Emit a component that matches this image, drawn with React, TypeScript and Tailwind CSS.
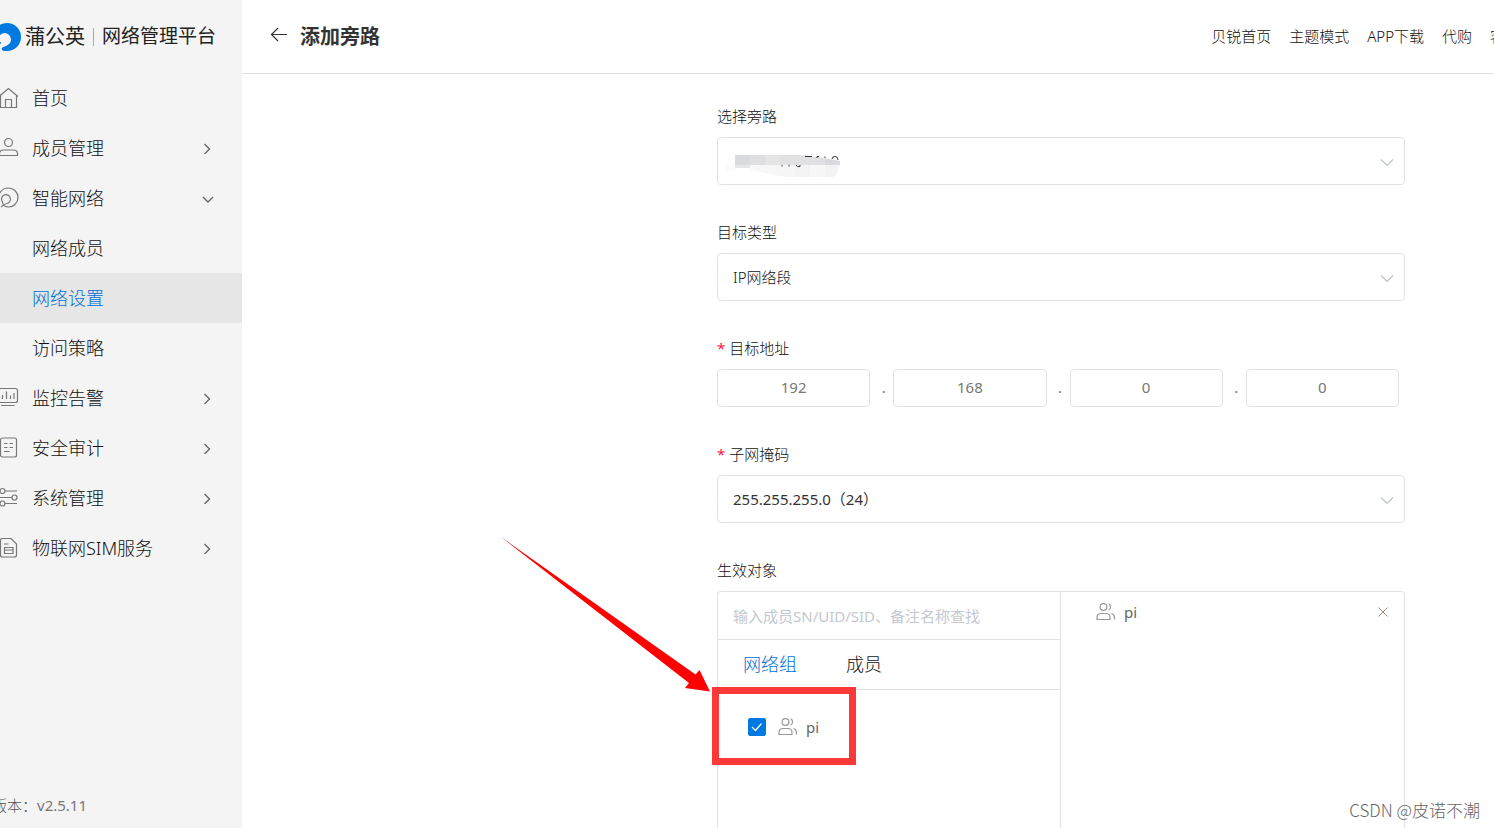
import { useState, type ReactNode } from "react";

type MenuItem = {
  label: string;
  icon: ReactNode;
  open?: boolean;
  children?: string[];
  leaf?: boolean;
};

const menu: MenuItem[] = [
  {
    label: "首页",
    leaf: true,
    icon: (
      <>
        <path d="M-1 9.5 8.5 1.5 18 9.5M.5 8.5V20.5H16.5V8.5" />
        <path d="M5.5 20V12.5H11.5V20" />
      </>
    ),
  },
  {
    label: "成员管理",
    icon: (
      <>
        <circle cx="8.5" cy="5.5" r="4" />
        <path d="M-.5 18.5V16.5Q-.5 13 4 13H13Q17.5 13 17.5 16.5V18.5Z" />
      </>
    ),
  },
  {
    label: "智能网络",
    open: true,
    children: ["网络成员", "网络设置", "访问策略"],
    icon: (
      <>
        <path d="M-1.5 14.5C-2.5 6 2 1 8.5 1A9.5 9.5 0 0 1 8.5 20C5.500 20 2.500 18.500 2.500 14.500" />
        <path d="M2.500 15A4.500 4.500 0 1 1 7 16.500Q4 17 1 20" />
      </>
    ),
  },
  {
    label: "监控告警",
    icon: (
      <>
        <rect x="-1.500" y="1.500" width="19" height="14" rx="2" />
        <path d="M1 18.500H14.500M2.500 8V12M6.500 4.500V12M10.500 8.500V12M14 6V12" />
      </>
    ),
  },
  {
    label: "安全审计",
    icon: (
      <>
        <rect x=".5" y="1" width="16" height="19" rx="2" />
        <path d="M4 6.500H7.500M9.500 6.500H13M4 10.500H7.500M9.500 10.500H13M4 14.500H9.500" />
      </>
    ),
  },
  {
    label: "系统管理",
    icon: (
      <>
        <circle cx="2.500" cy="4" r="2.500" />
        <circle cx="14.500" cy="10.500" r="2.500" />
        <circle cx="2.500" cy="16.500" r="2.500" />
        <path d="M5 4H17M-1 10.500H12M5 16.500H17" />
      </>
    ),
  },
  {
    label: "物联网SIM服务",
    icon: (
      <>
        <path d="M2.500 1.500H11L16.500 7V18Q16.500 20 14.500 20H2.500Q.5 20 .5 18V3.500Q.5 1.500 2.500 1.500Z" />
        <path d="M4 7H8.500M4.500 10.500H13V16.500H4.500ZM4.500 13H13" />
      </>
    ),
  },
];

const topLinks = ["贝锐首页", "主题模式", "APP下载", "代购"];

const Chevron = ({ down }: { down?: boolean }) => (
  <svg className="h-3 w-3" viewBox="0 0 12 12" fill="none" stroke="#666" strokeWidth="1.400">
    {down ? <path d="M1 5 6 10 11 5" /> : <path d="M2.500 2 7.500 7 2.500 12" />}
  </svg>
);

const UsersIcon = () => (
  <svg className="h-5 w-5" viewBox="0 0 20 20" fill="none" stroke="#999" strokeWidth="1.200">
    <circle cx="7.500" cy="5" r="3.400" />
    <path d="M1 17.500V15.500Q1 11.500 5 11.500H10Q14 11.500 14 15.500V17.500Z" />
    <path d="M12.500 1.800Q14.500 2.500 14.500 5T12.500 8.200M15.500 11.500Q18.400 12.500 18.400 15V17.500" />
  </svg>
);

const Sidebar = () => (
  <aside className="flex w-[242px] shrink-0 flex-col overflow-hidden bg-[#f4f4f4]">
    <div className="flex h-[73px] items-center whitespace-nowrap text-[#222]">
      <svg className="h-7 w-[22px] shrink-0" viewBox="0 0 22 28" fill="#0079e0">
        <path d="M0 1.700Q3 0 7 0A14 14 0 0 1 7 28Q2 28.500 1.700 26.300C1.500 24.500 3.500 24 5.500 23.300C9 22 11 19.500 11 16.500A6.500 6.500 0 0 0 4.500 10Q2 10 0 12Z" />
        <circle cx="0" cy="20" r="1" />
      </svg>
      <span className="ml-[3px] text-[20px]">蒲公英</span>
      <span className="mx-2 h-[18px] w-px bg-[#aaa]" />
      <span className="text-[19px]">网络管理平台</span>
    </div>
    <nav className="text-[18px] font-light text-[#111]">
      {menu.map((item) => (
        <div key={item.label}>
          <button type="button" className="flex h-[50px] w-full items-center">
            <svg className="h-[22px] w-5 shrink-0" viewBox="0 0 20 22" fill="none" stroke="#777" strokeWidth="1.200">
              {item.icon}
            </svg>
            <span className="ml-3">{item.label}</span>
            {!item.leaf && (
              <span className="mr-7 ml-auto">
                <Chevron down={item.open} />
              </span>
            )}
          </button>
          {item.children?.map((child) => (
            <a
              key={child}
              href="#"
              className={
                child === "网络设置"
                  ? "flex h-[50px] items-center bg-[#e6e6e6] pl-8 text-[#0070d8]"
                  : "flex h-[50px] items-center pl-8"
              }
            >
              {child}
            </a>
          ))}
        </div>
      ))}
    </nav>
    <div className="mt-auto -ml-2 pb-3 text-[15px] leading-[22px] font-light text-[#555]">
      版本：<span className="font-normal text-[#777]">v2.5.11</span>
    </div>
  </aside>
);

const Header = () => (
  <header className="flex h-[74px] shrink-0 items-center border-b border-[#e3e3e3] pl-7 whitespace-nowrap text-[#333]">
    <button type="button" aria-label="返回">
      <svg className="h-[18px] w-[18px]" viewBox="0 0 18 18" fill="none" stroke="#333" strokeWidth="1.200">
        <path d="M17 6.500H1.500M8 0 1.500 6.500 8 13" />
      </svg>
    </button>
    <h1 className="ml-3 text-[20px] font-bold">添加旁路</h1>
    <nav className="ml-auto flex gap-[18px] text-[15px] font-light text-[#111]">
      {topLinks.map((link) => (
        <a key={link} href="#">
          {link}
        </a>
      ))}
      <a href="#" className="w-1 overflow-hidden">
        客服
      </a>
    </nav>
  </header>
);

type FieldProps = {
  label: string;
  id: string;
  required?: boolean;
  children: ReactNode;
};

const Field = ({ label, id, required, children }: FieldProps) => (
  <div className="mb-[35px]">
    <label htmlFor={id} className="mb-[9px] block text-[15px] leading-6 font-light text-[#111]">
      {required && <span className="mr-1 font-normal text-[#ff1744]">*</span>}
      {label}
    </label>
    {children}
  </div>
);

const Select = ({ id, value, children }: { id: string; value: string; children?: ReactNode }) => (
  <div className="relative">
    <select
      id={id}
      className={
        /^\d/.test(value)
          ? "h-12 w-full appearance-none rounded-[4px] border border-[#e3e3e3] bg-white px-[15px] text-[15px] font-normal text-[#333]"
          : "h-12 w-full appearance-none rounded-[4px] border border-[#e3e3e3] bg-white px-[15px] text-[15px] font-light text-[#111]"
      }
    >
      <option>{value}</option>
    </select>
    {children}
    <svg
      className="pointer-events-none absolute top-[18px] right-[10px] h-4 w-4"
      viewBox="0 0 16 16"
      fill="none"
      stroke="#bcc2cc"
      strokeWidth="1.200"
    >
      <path d="M2 4.500 8 10.500 14 4.500" />
    </svg>
  </div>
);

// pixelated smear hiding the device serial number
const Mosaic = () => (
  <svg className="pointer-events-none absolute top-4 left-2 h-7 w-[120px]" viewBox="0 0 120 28">
    <path d="M0 12H10V18H0Z" fill="#fdfbf9" />
    <path d="M10 2H25V12H10Z" fill="#d9dadd" />
    <path d="M25 2H40V12H25Z" fill="#dfdfe1" />
    <path d="M40 2H55V12H40Z" fill="#e5e5e6" />
    <path d="M55 2H77L100 5L115 8V12H55Z" fill="#e1e1e3" />
    <path d="M100 6 115 8V12H100Z" fill="#d9dadd" />
    <path d="M10 12H25V15H10Z" fill="#e6e6e8" />
    <path d="M25 12H115L111 22Q108 24 100 24H60L40 20L25 16Z" fill="#f7f7f7" />
    <path d="M70 12H85V24H70ZM100 12H112V20L108 24H100Z" fill="#f3f3f3" />
    <g fill="none" stroke="#333">
      <path d="M80 3.500H87M92 5V3.500H94M100 5V3.500M107 6Q107 3.500 110 3.500T113 7" />
      <path d="M57 12V13.500M64 12V13.500M71 12Q72 14.500 75 13.500V12" />
    </g>
  </svg>
);

const Picker = () => {
  const [checked, setChecked] = useState(true);

  return (
    <div className="relative flex flex-1 rounded-t-[4px] border border-b-0 border-[#e3e3e3]">
      <div className="w-1/2 border-r border-[#e3e3e3]">
        <input
          id="target"
          type="text"
          placeholder="输入成员SN/UID/SID、备注名称查找"
          className="block h-12 w-full rounded-tl-[4px] border-b border-[#e3e3e3] px-[15px] text-[15px] placeholder:text-[#c4c8d0]"
        />
        <div className="flex h-[50px] items-center gap-[49px] border-b border-[#e3e3e3] pl-[25px] text-[18px] font-light text-[#111]">
          <button type="button" className="text-[#0070d8]">
            网络组
          </button>
          <button type="button">成员</button>
        </div>
        <label className="mt-[23px] ml-[30px] flex h-7 w-fit items-center text-[15px] text-[#666]">
          <span className="relative h-[18px] w-[18px]">
            <input
              type="checkbox"
              checked={checked}
              onChange={(e) => setChecked(e.target.checked)}
              className="block h-[18px] w-[18px] appearance-none rounded-[2px] border border-[#ccc] checked:border-[#0079e0] checked:bg-[#0079e0]"
            />
            <svg
              className="pointer-events-none absolute inset-0 h-[18px] w-[18px]"
              viewBox="0 0 18 18"
              fill="none"
              stroke="#fff"
              strokeWidth="1.200"
            >
              <path d="M4 9 7.500 12.500 13.500 5.500" />
            </svg>
          </span>
          <span className="mr-2 ml-3">
            <UsersIcon />
          </span>
          pi
        </label>
      </div>
      <div className="flex w-1/2 items-start pt-[6px] pr-4 pl-[35px] text-[15px] text-[#666]">
        <div className="flex h-7 w-full items-center">
          <UsersIcon />
          <span className="ml-2">pi</span>
          <button type="button" aria-label="移除" className="ml-auto">
            <svg className="h-[10px] w-[10px]" viewBox="0 0 10 10" fill="none" stroke="#a09080">
              <path d="M.5.5 9.500 9.500M9.500.5.5 9.500" />
            </svg>
          </button>
        </div>
      </div>
      <div className="pointer-events-none absolute top-[95px] -left-[6px] h-[78px] w-36 border-[7px] border-[#fb3939]" />
      <svg className="pointer-events-none absolute -top-[55px] -left-[218px] h-[156px] w-[212px]" viewBox="0 0 212 156" fill="#f00">
        <path d="M1 0 195.500 137.500 199.500 133 210 154.500 185 151 189 146Z" />
      </svg>
    </div>
  );
};

const App = () => {
  const address = ["192", "168", "0", "0"];

  return (
    <div className="relative flex min-h-screen bg-white font-['Noto_Sans','Noto_Sans_CJK_SC',sans-serif]">
      <Sidebar />
      <div className="flex min-w-0 flex-1 flex-col">
        <Header />
        <main className="mr-[89px] ml-auto flex w-full max-w-[688px] flex-1 flex-col pt-[30px]">
          <Field label="选择旁路" id="bypass">
            <Select id="bypass" value="">
              <Mosaic />
            </Select>
          </Field>
          <Field label="目标类型" id="type">
            <Select id="type" value="IP网络段" />
          </Field>
          <Field label="目标地址" id="ip-0" required>
            <div className="flex pr-[6px] text-[15px] text-[#777]">
              {address.map((part, i) => (
                <div key={i} className="contents">
                  {i > 0 && <span className="w-[23px] pt-[6px] pl-1 text-center leading-6">.</span>}
                  <input
                    id={`ip-${i}`}
                    aria-label={`目标地址 ${i + 1}`}
                    defaultValue={part}
                    className="h-[38px] min-w-0 flex-1 rounded-[4px] border border-[#e3e3e3] pb-[2px] text-center"
                  />
                </div>
              ))}
            </div>
          </Field>
          <Field label="子网掩码" id="mask" required>
            <Select id="mask" value="255.255.255.0（24）" />
          </Field>
          <label htmlFor="target" className="mb-[9px] block text-[15px] leading-6 font-light text-[#111]">
            生效对象
          </label>
          <Picker />
        </main>
      </div>
      <div className="pointer-events-none absolute right-[14px] bottom-[6px] font-['Noto_Sans_CJK_SC',sans-serif] text-[17px] leading-6 font-light text-[#666]">
        CSDN @皮诺不潮
      </div>
    </div>
  );
};

export default App;
